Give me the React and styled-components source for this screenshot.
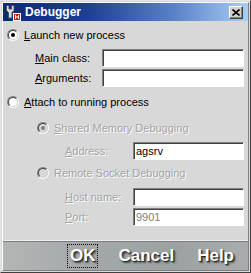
import React from "react";
import styled, { createGlobalStyle } from "styled-components";

const Global = createGlobalStyle`
  html, body {
    margin: 0;
    padding: 0;
    background: #d8d8d8;
    overflow: hidden;
  }
`;

const Window = styled.div`
  box-sizing: border-box;
  width: 251px;
  height: 273px;
  display: flex;
  flex-direction: column;
  background: #d8d8d8;
  border: 1px solid;
  border-color: #e4e4e4 #404040 #404040 #e4e4e4;
  padding: 1px;
  font-family: "Liberation Sans", Arial, sans-serif;
  font-size: 11px;
  color: #000;
`;

const Frame = styled.div`
  flex: 1;
  display: flex;
  flex-direction: column;
  border: 1px solid;
  border-color: #ffffff #808080 #808080 #ffffff;
`;

const TitleBar = styled.div`
  height: 18px;
  display: flex;
  align-items: center;
  padding: 0 5px 0 1px;
  background: linear-gradient(90deg, #0c2a72 0%, #1e4092 35%, #5a82c8 70%, #a8cef4 100%);
`;

const TitleText = styled.span`
  margin-left: 4px;
  flex: 1;
  color: #fff;
  font-weight: bold;
  font-size: 12px;
`;

const CloseButton = styled.div`
  box-sizing: border-box;
  width: 14px;
  height: 13px;
  display: flex;
  align-items: center;
  justify-content: center;
  background: #d4d0c8;
  border: 1px solid;
  border-color: #fff #404040 #404040 #fff;
  box-shadow: inset -1px -1px 0 #808080;
`;

const Body = styled.div`
  flex: 1;
  display: flex;
  flex-direction: column;
  padding: 0 4px 0 2px;
`;

const OptionRow = styled.div`
  height: 16px;
  margin-top: ${(p) => p.$top}px;
  margin-left: ${(p) => p.$indent}px;
  display: flex;
  align-items: center;
  gap: 5px;
`;

const Radio = styled.span`
  box-sizing: border-box;
  position: relative;
  width: 12px;
  height: 12px;
  border-radius: 50%;
  border: 1px solid;
  border-color: #808080 #fff #fff #808080;
  &::before {
    content: "";
    position: absolute;
    inset: 0;
    border-radius: 50%;
    border: 1px solid;
    border-color: #404040 #d4d0c8 #d4d0c8 #404040;
    background: ${(p) => (p.$disabled ? "#d8d8d8" : "#fff")};
  }
  &::after {
    content: "";
    display: ${(p) => (p.$checked ? "block" : "none")};
    position: absolute;
    left: 3px;
    top: 3px;
    width: 4px;
    height: 4px;
    border-radius: 50%;
    background: ${(p) => (p.$disabled ? "#808080" : "#000")};
  }
`;

const Label = styled.span`
  color: ${(p) => (p.$disabled ? "#a4a4a4" : "#000")};
  text-shadow: ${(p) => (p.$disabled ? "1px 1px 0 #fff" : "none")};
  white-space: nowrap;
`;

const FieldRow = styled.div`
  height: 18px;
  margin-top: ${(p) => p.$top}px;
  display: flex;
  align-items: center;
`;

const FieldLabel = styled(Label)`
  width: ${(p) => p.$width}px;
  box-sizing: border-box;
  padding-left: ${(p) => p.$indent}px;
`;

const Input = styled.div`
  box-sizing: border-box;
  width: ${(p) => p.$width}px;
  height: 18px;
  display: flex;
  align-items: center;
  padding-left: 2px;
  background: #fff;
  border: 1px solid;
  border-color: #808080 #fff #fff #808080;
  box-shadow: inset 1px 1px 0 #404040;
  color: ${(p) => (p.$disabled ? "#808080" : "#000")};
  font-size: 11px;
`;

const ButtonBar = styled.div`
  height: 28px;
  display: flex;
  align-items: center;
  justify-content: flex-end;
  gap: 17px;
  padding-right: 11px;
  border-top: 1px solid #7c7c7c;
  box-shadow: 0 -1px 0 #f0f0f0;
  background: linear-gradient(90deg, #b4b6b6 0%, #a4a8a8 35%, #9ca2a2 70%, #a8acac 100%);
`;

const Button = styled.div`
  box-sizing: border-box;
  height: 24px;
  padding: 0 2px;
  display: flex;
  align-items: center;
  color: #fff;
  font-weight: bold;
  font-size: 17px;
  text-shadow: 1px 1px 1px #202020, 2px 2px 2px #505050;
  border: 1px dotted ${(p) => (p.$focused ? "#000" : "transparent")};
`;

const U = styled.span`
  text-decoration: underline;
`;

function AppIcon() {
  return (
    <svg width="17" height="17" viewBox="0 0 17 17">
      <path
        d="M2.5 1.5 L5 1.5 L5 5 L7.5 5 L7.5 1.5 L10 1.5 L10 6.5 L8 8.5 L8 14 L4.5 14 L4.5 8.5 L2.5 6.5 Z"
        fill="#d6dae0"
        stroke="#4a4a5a"
        strokeWidth="0.9"
      />
      <rect x="9.5" y="9.5" width="7" height="7" fill="#d01818" stroke="#fff" strokeWidth="1" />
      <path d="M11.5 11 L11.5 15 M14.5 11 L14.5 15 M11.5 13 L14.5 13" stroke="#fff" strokeWidth="1" />
    </svg>
  );
}

function CloseIcon() {
  return (
    <svg width="8" height="7" viewBox="0 0 8 7">
      <path d="M0.5 0.5 L7.5 6.5 M7.5 0.5 L0.5 6.5" stroke="#000" strokeWidth="1.6" />
    </svg>
  );
}

export default function App() {
  return (
    <>
      <Global />
      <Window>
        <Frame>
          <TitleBar>
            <AppIcon />
            <TitleText>Debugger</TitleText>
            <CloseButton>
              <CloseIcon />
            </CloseButton>
          </TitleBar>
          <Body>
            <OptionRow $top={6} $indent={2}>
              <Radio $checked />
              <Label>
                <U>L</U>aunch new process
              </Label>
            </OptionRow>
            <FieldRow $top={6}>
              <FieldLabel $width={97} $indent={30}>
                <U>M</U>ain class:
              </FieldLabel>
              <Input $width={143} />
            </FieldRow>
            <FieldRow $top={2}>
              <FieldLabel $width={97} $indent={30}>
                <U>A</U>rguments:
              </FieldLabel>
              <Input $width={143} />
            </FieldRow>
            <OptionRow $top={7} $indent={2}>
              <Radio />
              <Label>
                <U>A</U>ttach to running process
              </Label>
            </OptionRow>
            <OptionRow $top={10} $indent={32}>
              <Radio $checked $disabled />
              <Label $disabled>
                <U>S</U>hared Memory Debugging
              </Label>
            </OptionRow>
            <FieldRow $top={6}>
              <FieldLabel $disabled $width={128} $indent={60}>
                <U>A</U>ddress:
              </FieldLabel>
              <Input $width={111}>agsrv</Input>
            </FieldRow>
            <OptionRow $top={5} $indent={32}>
              <Radio $disabled />
              <Label $disabled>Remote Socket Debugging</Label>
            </OptionRow>
            <FieldRow $top={7}>
              <FieldLabel $disabled $width={128} $indent={60}>
                <U>H</U>ost name:
              </FieldLabel>
              <Input $width={111} />
            </FieldRow>
            <FieldRow $top={2}>
              <FieldLabel $disabled $width={128} $indent={60}>
                <U>P</U>ort:
              </FieldLabel>
              <Input $width={111} $disabled>
                9901
              </Input>
            </FieldRow>
          </Body>
          <ButtonBar>
            <Button $focused>OK</Button>
            <Button>Cancel</Button>
            <Button>Help</Button>
          </ButtonBar>
        </Frame>
      </Window>
    </>
  );
}
